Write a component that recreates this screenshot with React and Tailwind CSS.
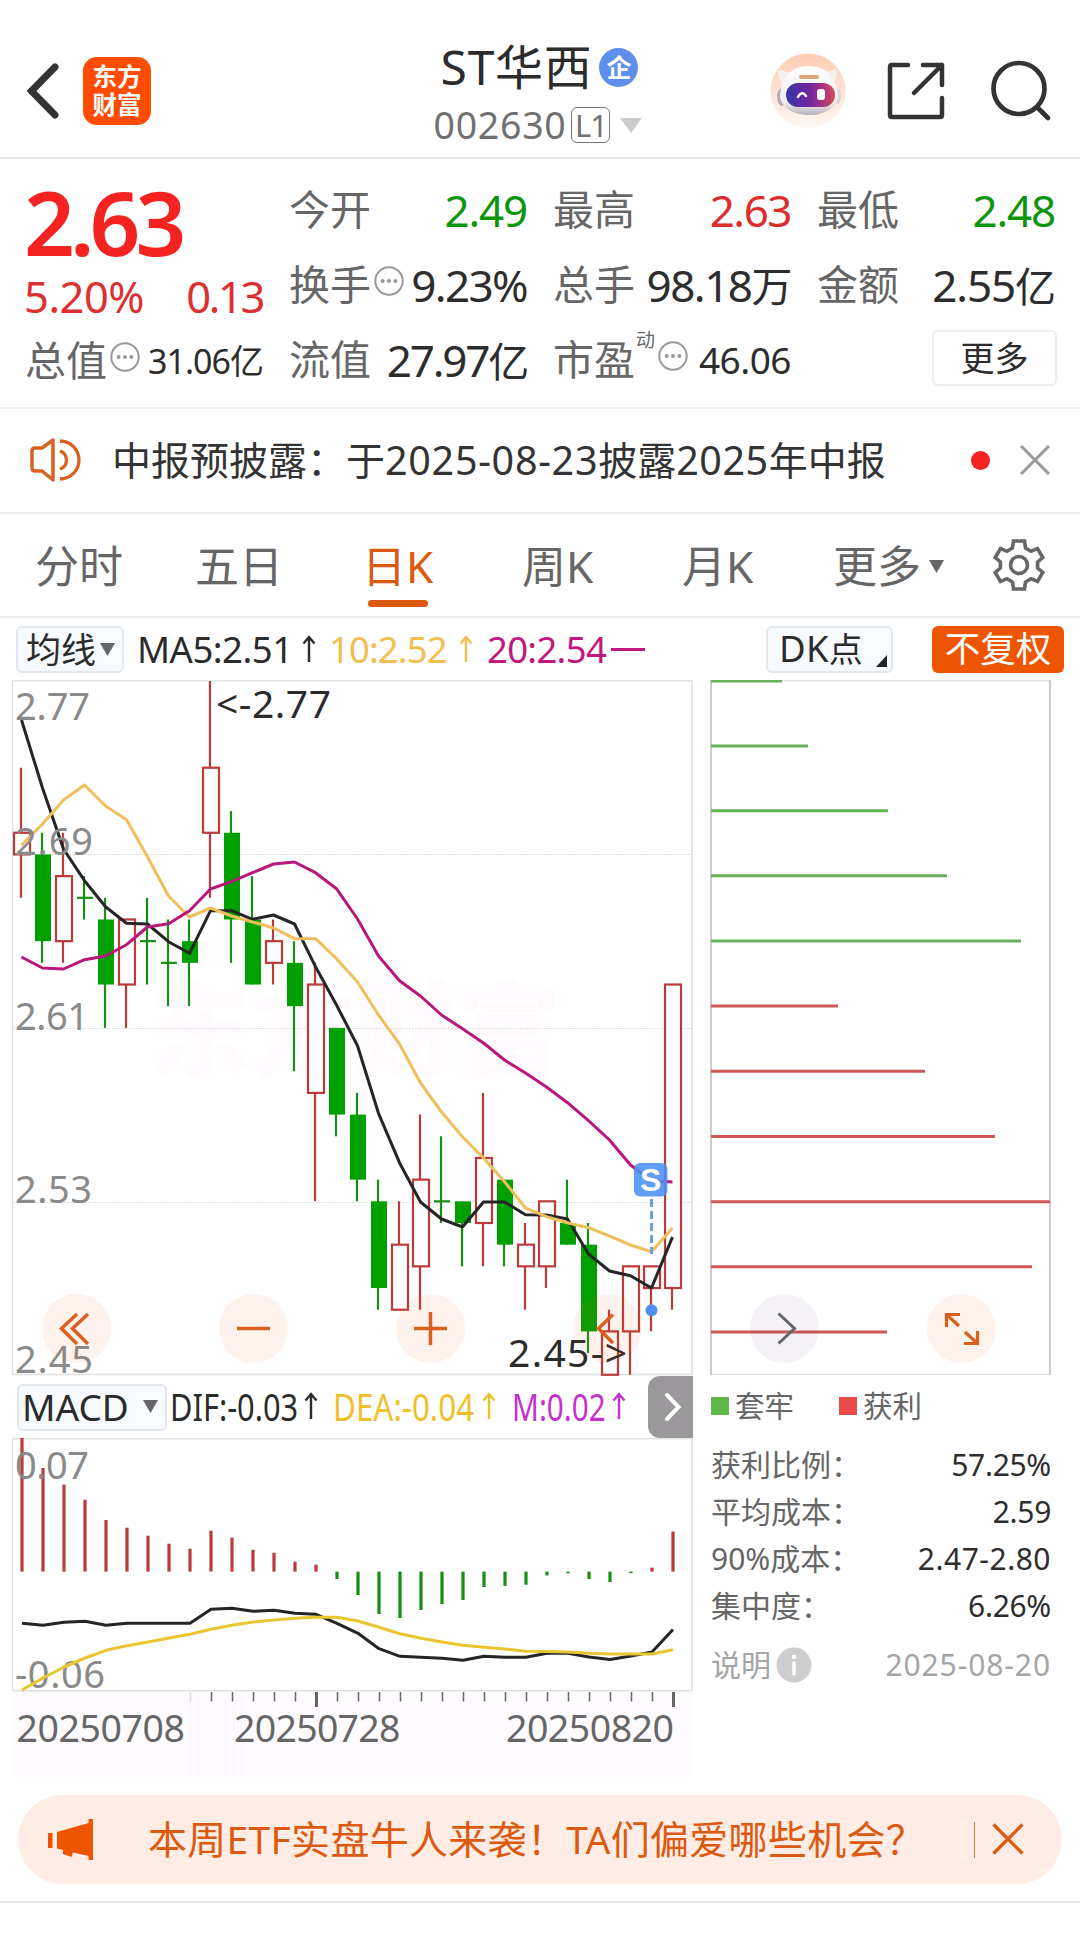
import React from "react";

const FONT = "font-['Noto_Sans','Noto_Sans_CJK_SC',sans-serif]";
const FAMILY = "'Noto Sans','Noto Sans CJK SC',sans-serif";

const RED = "#bb3a3a";
const GREEN = "#00a000";

/* Candles as [up, high, low, bodyTop, bodyBottom], in cents below 2.77 */
const CANDLES = [
  [1, 4, 10, 7, 8], [0, 7, 13, 8, 12], [1, 7, 13, 9, 12], [0, 9, 11, 10, 10],
  [0, 10, 16, 11, 14], [1, 11, 16, 11, 14], [0, 10, 14, 12, 12], [0, 11, 15, 13, 13],
  [0, 11, 15, 12, 13], [1, 0, 10, 4, 7], [0, 6, 13, 7, 11], [0, 9, 14, 11, 14],
  [1, 11, 14, 12, 13], [0, 12, 18, 13, 15], [1, 13, 24, 14, 19], [0, 16, 21, 16, 20],
  [0, 19, 24, 20, 23], [0, 23, 29, 24, 28], [1, 24, 29, 26, 29], [1, 20, 29, 23, 27],
  [0, 21, 25, 24, 24], [0, 24, 27, 24, 25], [1, 19, 27, 22, 25], [0, 23, 27, 23, 26],
  [1, 25, 29, 26, 27], [1, 24, 28, 24, 27], [0, 23, 26, 25, 26], [0, 25, 31, 26, 30],
  [1, 29, 32, 30, 32], [1, 27, 32, 27, 30], [1, 27, 30, 27, 28], [1, 14, 29, 14, 28],
];
const MA5 = [720, 788, 849, 880.7, 906.7, 923.3, 924, 941.7, 953.3, 910.7, 910.7, 919.3, 915, 924, 966.7, 1005, 1045.7, 1113.3, 1162.7, 1202, 1219, 1227, 1202, 1202, 1214.7, 1215, 1219, 1254, 1271, 1275.7, 1288, 1237];
const MA10 = [845, 824, 800, 785, 806, 819.7, 856.7, 896, 917, 908, 916, 922, 928, 938.7, 938.7, 958.7, 982, 1015, 1044, 1083, 1112, 1136.7, 1158, 1181.7, 1208, 1216.7, 1222.7, 1227.7, 1236, 1245, 1251.7, 1228];
const MA20 = [957, 968, 969, 959.7, 956, 944.7, 927, 923.7, 910.7, 889, 881.7, 872.7, 864, 862, 872.7, 888.7, 919, 956, 980.7, 996, 1015, 1028.7, 1043, 1060, 1073, 1087, 1102.7, 1120.7, 1140, 1165, 1180.7, 1182];
const MACD_BARS = [1438, 1468, 1484.7, 1499.7, 1520, 1527.7, 1535.7, 1543.7, 1548.7, 1530.7, 1537.7, 1549.7, 1552.7, 1561.7, 1564.7, 1579, 1595, 1614, 1618, 1610, 1604, 1600, 1587, 1586, 1584.7, 1575.4, 1573.2, 1579, 1582, 1573.2, 1567.6, 1531.5];
const DIF = [1623.3, 1625.3, 1622.3, 1621.3, 1625.3, 1623.3, 1623.3, 1623.3, 1623.3, 1609.3, 1608.3, 1611.3, 1610.3, 1613.3, 1614.3, 1623.3, 1633.3, 1648.7, 1656.3, 1657.3, 1658.3, 1660.3, 1656.3, 1657.3, 1657.3, 1653.3, 1653.3, 1657, 1659.6, 1656, 1652, 1629.5];
const DEA = [1690, 1678, 1667, 1658, 1650.3, 1645.7, 1642, 1638, 1634.3, 1629.3, 1625.3, 1622, 1620, 1618.3, 1617.3, 1617.3, 1621, 1627.3, 1633.7, 1638.3, 1642, 1645.3, 1647.3, 1649, 1651.3, 1651.5, 1652, 1653.3, 1654, 1654, 1654, 1649.7];
const CHIPS = [[681, 782, 0], [746, 808, 0], [810.7, 888, 0], [875.8, 947, 0], [941, 1021, 0], [1006, 838, 1], [1071.3, 925, 1], [1136.5, 995, 1], [1201.7, 1050, 1], [1266.8, 1032, 1], [1332, 887, 1]];

const cx = (i) => 21 + i * 21;
const py = (k) => 681 + k * 21.68;
const line = (ys, dx) => ys.map((y, i) => `${cx(i) + dx},${y}`).join(" ");

function Dots({ className }) {
  return (
    <svg viewBox="0 0 30 30" className={`h-[30px] w-[30px] shrink-0 ${className}`}>
      <circle cx="15" cy="15" r="13.7" fill="none" stroke="#999" strokeWidth="2" />
      <circle cx="8.6" cy="15" r="2" fill="#999" />
      <circle cx="15" cy="15" r="2" fill="#999" />
      <circle cx="21.4" cy="15" r="2" fill="#999" />
    </svg>
  );
}

function Header() {
  return (
    <header className="flex h-[159px] items-start justify-between border-b-2 border-[#e6e6e6] pl-[27px] pr-[28px]">
      <div className="mt-[57px] flex w-[300px] items-center gap-[24px]">
        <svg viewBox="0 0 32 56" className="h-[56px] w-[32px]">
          <path d="M28 4 4.500 28 28 52" fill="none" stroke="#333" strokeWidth="7" strokeLinecap="round" />
        </svg>
        <div className="flex h-[68px] w-[68px] flex-col items-center justify-center rounded-[14px] bg-[#ff4c00] pb-[2px] font-['Noto_Sans_CJK_SC',sans-serif] text-[24.500px] font-bold leading-[28px] text-white">
          <span>东方</span>
          <span>财富</span>
        </div>
      </div>
      <div className="flex flex-col items-center pt-[42px]">
        <div className="flex h-[50px] items-center text-[48px] leading-none text-[#2b2b2b]">
          <span className="tracking-[0.7px]">ST华西</span>
          <span className="ml-[7px] flex h-[39px] w-[39px] items-center justify-center rounded-full bg-[#5f8fea] text-[25px] font-bold text-white">企</span>
        </div>
        <div className="-ml-[3px] mt-[14px] flex h-[38px] items-center text-[37.500px] leading-none text-[#707070]">
          <span className="tracking-[0.7px]">002630</span>
          <span className="ml-[5px] flex h-[36px] w-[39px] items-center justify-center rounded-[6px] border-[1.5px] border-[#777] text-[31px] tracking-[-1px]">L1</span>
          <svg viewBox="0 0 22 15" className="ml-[10px] h-[15px] w-[22px]"><path d="M0 0H22L11 15Z" fill="#ccc" /></svg>
        </div>
      </div>
      <div className="mt-[53px] flex w-[300px] items-center justify-end">
        <svg viewBox="0 0 76 76" className="h-[76px] w-[76px]">
          <defs>
            <linearGradient id="halo" x1="0" y1="0" x2="0" y2="1"><stop offset="0" stopColor="#ffccb3" /><stop offset="1" stopColor="#fff8f5" /></linearGradient>
            <linearGradient id="visor" x1="0" y1="0" x2="1" y2="0"><stop offset="0" stopColor="#3437a8" /><stop offset="0.5" stopColor="#75249c" /><stop offset="1" stopColor="#d8485f" /></linearGradient>
            <linearGradient id="shell" x1="0" y1="0" x2="0" y2="1"><stop offset="0" stopColor="#fff" /><stop offset="0.75" stopColor="#efebee" /><stop offset="1" stopColor="#b8b0b8" /></linearGradient>
          </defs>
          <circle cx="38" cy="38" r="37.500" fill="url(#halo)" />
          <path d="M8 17 22 20 13 32Q7 25 8 17ZM66 16 54 20 63 30Q69 24 66 16Z" fill="#f5eeee" />
          <ellipse cx="12" cy="44" rx="5" ry="9" fill="#b5acb5" />
          <ellipse cx="67" cy="43" rx="4" ry="8" fill="#ddd5da" />
          <path d="M38 13C56 13 66 24 68 42 68 54 55 62 40 62 23 62 11 55 10 43 11 26 21 13 38 13Z" fill="url(#shell)" />
          <rect x="29" y="22" width="20" height="4" rx="2" fill="#dda676" />
          <rect x="16" y="30" width="49" height="24" rx="12" fill="url(#visor)" />
          <path d="M28 44Q32 37 36 43" fill="none" stroke="#fff" strokeWidth="2.500" strokeLinecap="round" />
          <rect x="47" y="36" width="8" height="11" rx="3" fill="#fff" />
        </svg>
        <svg viewBox="0 0 60 60" className="ml-[40px] h-[60px] w-[60px]">
          <path d="M22 4H6Q4 4 4 6V54Q4 56 6 56H54Q56 56 56 54V37M37 4H56V24M56 4 28 32" fill="none" stroke="#333" strokeWidth="4.500" strokeLinecap="round" strokeLinejoin="round" />
        </svg>
        <svg viewBox="0 0 64 64" className="ml-[42px] h-[64px] w-[64px]">
          <circle cx="31" cy="29.500" r="25.500" fill="none" stroke="#333" strokeWidth="4.700" />
          <path d="M49 48 60 59" stroke="#333" strokeWidth="4.700" strokeLinecap="round" />
        </svg>
      </div>
    </header>
  );
}

function Cell({ label, icon, sup, children, tone = "text-[#2d2d2d]", size = "text-[44px] tracking-[-0.8px]" }) {
  return (
    <div className="flex h-[75px] items-center justify-between whitespace-nowrap leading-none">
      <div className="-ml-[2px] flex items-center text-[41px] text-[#666]">
        <span>{label}</span>
        {sup && <span className="mb-[38px] ml-[1px] text-[19px]">{sup}</span>}
        {icon && <Dots className="mb-[8px] ml-[3px]" />}
      </div>
      <div className={`${size} ${tone}`}>{children}</div>
    </div>
  );
}

function Quote() {
  return (
    <section className="grid h-[250px] grid-cols-[236px_236px_236px_236px] gap-x-[28px] border-b-2 border-[#f0f0f2] pl-[27px] pt-[13px]">
      <div>
        <div className="-ml-[3px] flex h-[98px] items-center text-[89px] font-semibold leading-none tracking-[-5px] text-[#f52222]">2.63</div>
        <div className="flex h-[53px] items-center justify-between text-[43.500px] leading-none text-[#dd3030]">
          <span className="-ml-[3px] tracking-[-0.5px]">5.20%</span>
          <span className="tracking-[-2.400px]">0.13</span>
        </div>
        <Cell label="总值" icon size="text-[34px] tracking-[-1px]">31.06亿</Cell>
      </div>
      <div>
        <Cell label="今开" tone="text-[#0c960c]" size="text-[44px] tracking-[-1.200px]">2.49</Cell>
        <Cell label="换手" icon size="text-[44px] tracking-[-1.6px]">9.23%</Cell>
        <Cell label="流值" size="text-[44px] tracking-[-2.200px]">27.97<span className="text-[41px]">亿</span></Cell>
      </div>
      <div>
        <Cell label="最高" tone="text-[#dd2c2c]" size="text-[44px] tracking-[-1.500px]">2.63</Cell>
        <Cell label="总手" size="text-[44px] tracking-[-1.500px]">98.18<span className="text-[41px]">万</span></Cell>
        <Cell label="市盈" sup="动" icon size="text-[37px] tracking-[-0.500px]">46.06</Cell>
      </div>
      <div>
        <Cell label="最低" tone="text-[#0c960c]" size="text-[44px] tracking-[-1.200px]">2.48</Cell>
        <Cell label="金额" size="text-[44px] tracking-[-1.100px]">2.55<span className="text-[41px]">亿</span></Cell>
        <div className="flex h-[71px] items-center justify-end">
          <button className="-mr-[2px] flex h-[56px] w-[125px] items-center justify-center rounded-[6px] border-2 border-[#ececf0] text-[34px] leading-none text-[#2d2d2d]">更多</button>
        </div>
      </div>
    </section>
  );
}

function Notice() {
  return (
    <section className="flex h-[105px] items-center border-b-2 border-[#e9e9ee] pb-[1px] pl-[29px] pr-[30px]">
      <svg viewBox="0 0 52 46" className="h-[46px] w-[52px]">
        <path d="M24 3V43L13 34H6Q3 34 3 31V14Q3 11 6 11H13Z" fill="none" stroke="#d9601f" strokeWidth="3.500" strokeLinejoin="round" />
        <path d="M31 4A19 19 0 0 1 31 42M31 14A9.500 9.500 0 0 1 31 32" fill="none" stroke="#d9601f" strokeWidth="3.300" />
      </svg>
      <p className="ml-[31px] whitespace-nowrap text-[39px] leading-none text-[#333]">
        中报预披露：于<span className="text-[39.500px] tracking-[0.700px]">2025-08-23</span>披露<span className="text-[39.500px] tracking-[0.500px]">2025</span>年中报
      </p>
      <span className="ml-auto mr-[30px] h-[19px] w-[19px] rounded-full bg-[#f52222]" />
      <svg viewBox="0 0 30 30" className="h-[30px] w-[30px]"><path d="M1 1 29 29M29 1 1 29" stroke="#999" strokeWidth="3" /></svg>
    </section>
  );
}

function Tabs() {
  return (
    <nav className="flex h-[104px] items-center border-b-2 border-[#e9e9ee] pl-[35px] pt-[2px] text-[44px] leading-none text-[#666]">
      <span className="w-[160px]">分时</span>
      <span className="w-[167px]">五日</span>
      <span className="relative w-[160px] text-[#dc5a10]">
        日K
        <i className="absolute left-[6px] top-[56px] h-[7px] w-[60px] rounded-full bg-[#dc5a10]" />
      </span>
      <span className="w-[160px]">周K</span>
      <span className="w-[151px]">月K</span>
      <span>更多</span>
      <svg viewBox="0 0 15 13" className="ml-[8px] h-[13px] w-[15px]"><path d="M0 0H15L7.500 13Z" fill="#666" /></svg>
      <svg viewBox="0 0 52 54" className="mb-[2px] ml-[49px] h-[54px] w-[52px]">
        <path d="M20.500 3H31.500L32.500 10 38 13.300 44.500 10.500 49.800 19.500 44.600 24V30L49.800 34.500 44.500 43.500 38 40.700 32.500 44 31.500 51H20.500L19.500 44 14 40.700 7.500 43.500 2.200 34.500 7.400 30V24L2.200 19.500 7.500 10.500 14 13.300 19.500 10Z" fill="none" stroke="#666" strokeWidth="3.600" />
        <circle cx="26" cy="27" r="8.500" fill="none" stroke="#666" strokeWidth="3.600" />
      </svg>
    </nav>
  );
}

/* Slim upward marker that follows each indicator reading */
function Arrow() {
  return (
    <svg viewBox="0 0 14 28" className="h-[28px] w-[14px] shrink-0">
      <path d="M7 27V2M1.500 8.500 7 2 12.500 8.500" fill="none" stroke="currentColor" strokeWidth="2.400" />
    </svg>
  );
}

function Toolbar() {
  return (
    <div className="flex h-[62px] items-center pl-[16px] text-[36.500px] leading-none text-[#2b2b2b]">
      <div className="flex h-[47px] w-[108px] items-center rounded-[6px] border-2 border-[#e4e6f0] bg-[#f7faff] pl-[8px] text-[35px]">
        均线
        <svg viewBox="0 0 15 13" className="ml-[4px] h-[13px] w-[15px]"><path d="M0 0H15L7.500 13Z" fill="#666" /></svg>
      </div>
      <div className="ml-[13px] flex w-[192px] items-center whitespace-nowrap"><span className="w-[165px] tracking-[-0.5px]">MA5:2.51</span><Arrow /></div>
      <div className="flex w-[158px] items-center whitespace-nowrap text-[#f3bd50]"><span className="w-[130px] tracking-[-0.9px]">10:2.52</span><Arrow /></div>
      <div className="flex w-[190px] items-center whitespace-nowrap text-[#c0187c]"><span className="w-[124px] tracking-[-0.7px]">20:2.54</span><i className="h-[3px] w-[34px] bg-[#c0187c]" /></div>
      <div className="ml-auto flex h-[47px] w-[127px] items-end justify-between rounded-[6px] border-2 border-[#e4e6f0] bg-[#f7faff] pb-[4px] pl-[11px] pr-[4px]">
        <span className="whitespace-nowrap tracking-[0.300px]">DK<span className="text-[34px]">点</span></span>
        <svg viewBox="0 0 11 12" className="h-[12px] w-[11px] shrink-0"><path d="M11 0V12H0Z" fill="#222" /></svg>
      </div>
      <div className="ml-[39px] mr-[16px] flex h-[47px] w-[132px] items-center justify-center rounded-[6px] bg-[#ee5500] text-[35.500px] text-white">不复权</div>
    </div>
  );
}

function PriceChart() {
  return (
    <svg viewBox="12 680 681 696" className="block h-[696px] w-[681px]" fontFamily={FAMILY}>
      <text x="148" y="1069" fontSize="103" fontWeight="900" fill="#fefafe">东方财富</text>
      <rect x="12.500" y="680.700" width="679.500" height="693.800" fill="none" stroke="#e2e2e2" strokeWidth="1.600" />
      {[854, 1028, 1202].map((y) => <path key={y} d={`M13 ${y}.5H692`} stroke="#d6d6d6" strokeWidth="1" strokeDasharray="1.500 1.500" />)}
      {CANDLES.map(([up, hi, lo, a, b], i) => {
        const x = cx(i);
        if (up)
          return (
            <g key={i} stroke={RED} strokeWidth="2.200">
              <path d={`M${x} ${py(hi)}V${py(a)}M${x} ${py(b)}V${py(lo)}`} />
              <rect x={x - 7} y={py(a)} width="16" height={py(b) - py(a)} fill="#fff" />
            </g>
          );
        return (
          <g key={i}>
            <path d={`M${x} ${py(hi)}V${py(lo)}`} stroke="#159015" strokeWidth="2.200" />
            {a === b ? <path d={`M${x - 7} ${py(a)}H${x + 9}`} stroke="#159015" strokeWidth="2.200" /> : <rect x={x - 7} y={py(a)} width="16" height={py(b) - py(a)} fill={GREEN} />}
          </g>
        );
      })}
      <g fill="none" strokeWidth="3" strokeLinejoin="round">
        <polyline points={line(MA5, 0.5)} stroke="#252525" />
        <polyline points={line(MA10, 0.5)} stroke="#efbf5c" />
        <polyline points={line(MA20, 0.5)} stroke="#b9177a" />
      </g>
      <g fontSize="38" fill="#8a8a8a">
        <text x="15" y="719.500" textLength="75">2.77</text>
        <text x="15" y="855" textLength="78">2.69</text>
        <text x="15" y="1029.500" textLength="74">2.61</text>
        <text x="15" y="1203" textLength="77">2.53</text>
        <text x="15" y="1373" textLength="78">2.45</text>
      </g>
      <g fontSize="39" fill="#2b2b2b">
        <text x="216" y="718" textLength="115">&lt;-2.77</text>
        <text x="508" y="1367" textLength="119">2.45-&gt;</text>
      </g>
      <rect x="634" y="1163" width="33.500" height="33.500" rx="6" fill="#4a90f5" fillOpacity="0.88" />
      <text x="650.700" y="1191" fontSize="32" fontWeight="600" textAnchor="middle" fill="#fff" fontFamily="Liberation Sans, sans-serif">S</text>
      <path d="M651.500 1199V1254" stroke="#6a9fe0" strokeWidth="3" strokeDasharray="8 4" />
      <circle cx="651.500" cy="1310.300" r="6" fill="#5090f0" />
    </svg>
  );
}

const ROUND = "absolute top-[614px] h-[69px] w-[69px] rounded-full";

function RoundButton({ place, tint = "bg-[#f05a14]/[0.08]", color = "#d9601f", d, width = 3.5 }) {
  return (
    <button className={`${ROUND} ${place} ${tint}`}>
      <svg viewBox="0 0 69 69" className="h-[69px] w-[69px]"><path d={d} fill="none" stroke={color} strokeWidth={width} /></svg>
    </button>
  );
}

function MacdBar() {
  return (
    <div className="flex h-[62px] items-center whitespace-nowrap pl-[5px] text-[38.500px] leading-none">
      <div className="flex h-[47px] w-[150px] shrink-0 items-center justify-between rounded-[6px] border-2 border-[#e4e6f0] bg-[#f7faff] pb-[2px] pl-[3px] pr-[7px] text-[37px] text-[#2b2b2b]">
        <span className="inline-block w-[104px]">MACD</span>
        <svg viewBox="0 0 15 13" className="h-[13px] w-[15px]"><path d="M0 0H15L7.500 13Z" fill="#666" /></svg>
      </div>
      <div className="ml-[3px] flex w-[149px] shrink-0 items-center pb-[2px] text-[#2b2b2b]"><span className="inline-block w-[134px] origin-left scale-x-[0.8]">DIF:-0.03</span><Arrow /></div>
      <div className="ml-[14px] flex w-[164px] shrink-0 items-center pb-[2px] text-[#edc02c]"><span className="inline-block w-[149px] origin-left scale-x-[0.815]">DEA:-0.04</span><Arrow /></div>
      <div className="ml-[15px] flex w-[120px] shrink-0 items-center pb-[2px] text-[#c433c9]"><span className="inline-block w-[100px] origin-left scale-x-[0.77]">M:0.02</span><Arrow /></div>
      <button className="ml-auto flex h-[62px] w-[45px] shrink-0 items-center justify-center rounded-l-[12px] bg-[#9b989b]">
        <svg viewBox="0 0 18 30" className="ml-[4px] h-[30px] w-[18px]"><path d="M3 3 14.500 15 3 27" fill="none" stroke="#fff" strokeWidth="4" strokeLinecap="round" /></svg>
      </button>
    </div>
  );
}

function MacdChart() {
  return (
    <svg viewBox="12 1438 681 340" className="block h-[340px] w-[681px]" fontFamily={FAMILY}>
      <rect x="12" y="1691" width="681" height="86" fill="#fefbff" />
      {[190, 198, 226, 234, 242].map((x) => <path key={x} d={`M${x} 1692V1777`} stroke="#f7f4fa" />)}
      <rect x="12.500" y="1438.700" width="679.500" height="252" fill="none" stroke="#e2e2e2" strokeWidth="1.600" />
      {MACD_BARS.map((y, i) => <path key={i} d={`M${cx(i) + 1} 1571.600V${y}`} stroke={y < 1571 ? RED : "#159015"} strokeWidth="3.200" />)}
      <g fontSize="38" fill="#8a8a8a">
        <text x="15" y="1479" textLength="74">0.07</text>
        <text x="15" y="1687.500" textLength="90">-0.06</text>
      </g>
      <g fill="none" strokeWidth="3" strokeLinejoin="round">
        <polyline points={line(DIF, 1)} stroke="#252525" />
        <polyline points={line(DEA, 1)} stroke="#ebc52f" />
      </g>
      {MACD_BARS.map((_, i) => {
        if (i < 8) return null;
        const major = i === 14 || i === 31;
        return <path key={i} d={`M${cx(i) + 1.5} 1692V${major ? 1707 : 1701.5}`} stroke={i === 8 ? "#ddd" : "#666"} strokeWidth={major ? 3 : 1.5} />;
      })}
      <g fontSize="37.500" fill="#666">
        <text x="16.500" y="1742" textLength="168.500">20250708</text>
        <text x="234" y="1742" textLength="166.500">20250728</text>
        <text x="506" y="1742" textLength="168">20250820</text>
      </g>
    </svg>
  );
}

function ChipChart() {
  return (
    <svg viewBox="710 680 342 696" className="block h-[696px] w-[342px]">
      <path d="M711 680.700H1050M711 1374.500H1050" stroke="#e2e2e2" strokeWidth="1.600" />
      <path d="M711 680V1375M1050 680V1375" stroke="#ccc" strokeWidth="2" />
      {CHIPS.map(([y, x, up]) => <path key={y} d={`M711 ${y}H${x}`} stroke={up ? "#cf5757" : "#67b35a"} strokeWidth="3" />)}
    </svg>
  );
}

function ChipRow({ label, value }) {
  return (
    <div className="flex h-[47px] items-center justify-between">
      <span className="text-[#666]">{label}</span>
      <span className="tracking-[-0.300px] text-[#2d2d2d]">{value}</span>
    </div>
  );
}

function ChipPanel() {
  return (
    <div className="pl-[1px] text-[30px] leading-none">
      <div className="flex h-[64px] items-center pb-[5px] text-[29.500px] text-[#666]">
        <i className="h-[18px] w-[18px] bg-[#5cb848]" />
        <span className="ml-[6px]">套牢</span>
        <i className="ml-[45px] h-[18px] w-[18px] bg-[#ec4b4b]" />
        <span className="ml-[6px]">获利</span>
      </div>
      <div className="w-[340px] pt-[1px]">
        <ChipRow label="获利比例：" value="57.25%" />
        <ChipRow label="平均成本：" value="2.59" />
        <ChipRow label="90%成本：" value={<span className="tracking-[0.500px]">2.47-2.80</span>} />
        <ChipRow label="集中度：" value="6.26%" />
        <div className="mt-[12px] flex h-[48px] items-center text-[#a5a5a5]">
          <span>说明</span>
          <svg viewBox="0 0 36 36" className="ml-[5px] h-[36px] w-[36px]">
            <circle cx="18" cy="18" r="17.500" fill="#cdcdcd" />
            <circle cx="18" cy="10" r="2.300" fill="#fff" />
            <path d="M18 16V27" stroke="#fff" strokeWidth="3.600" strokeLinecap="round" />
          </svg>
          <span className="ml-auto tracking-[0.900px]">2025-08-20</span>
        </div>
      </div>
    </div>
  );
}

function Banner() {
  return (
    <div className="ml-[18px] mt-[17px] flex h-[89px] w-[1044px] items-center rounded-full bg-[#ffede5] pl-[29px] text-[#dc5a10]">
      <svg viewBox="0 0 48 42" className="h-[42px] w-[48px]">
        <path d="M1 14H5.500V29H1ZM10 13 41.500 4V0H46V41H41.500V37L26 33.500 24.500 38 16 35V31L10 29.500Z" fill="#ee5500" />
      </svg>
      <p className="mb-[2px] ml-[53px] whitespace-nowrap text-[39px] leading-none tracking-[0.300px]">本周ETF实盘牛人来袭！TA们偏爱哪些机会？</p>
      <i className="ml-auto h-[36px] w-[1.500px] bg-[#dc7a45]" />
      <svg viewBox="0 0 32 32" className="mb-[2px] ml-[17px] mr-[38px] h-[32px] w-[32px]"><path d="M1.500 1.500 30.500 30.500M30.500 1.500 1.500 30.500" stroke="#dc5a10" strokeWidth="3.300" /></svg>
    </div>
  );
}

export default function App() {
  return (
    <main className={`h-[1935px] w-[1080px] overflow-hidden bg-white ${FONT}`}>
      <Header />
      <Quote />
      <Notice />
      <Tabs />
      <Toolbar />
      <div className="relative flex pl-[12px]">
        <div className="w-[681px]">
          <PriceChart />
          <MacdBar />
          <MacdChart />
        </div>
        <div className="ml-[17px] w-[342px]">
          <ChipChart />
          <ChipPanel />
        </div>
        <RoundButton place="left-[42px]" d="M35 20 19.500 34.500 35 50M46 20 30.500 34.500 46 50" />
        <RoundButton place="left-[219px]" d="M18 34.500H51" />
        <RoundButton place="left-[396px]" d="M18 34.500H51M34.500 18V51" />
        <RoundButton place="left-[573px]" d="M40 20.500 25.500 34.500 40 49" />
        <RoundButton place="left-[750px]" tint="bg-[#785a8c]/[0.08]" color="#666" width={3} d="M28.500 19.500 44.500 34.500 28.500 49.500" />
        <RoundButton place="left-[927px]" width={3.2} d="M33 20.500H19.500V33M20 21 32 32M37 49.500H50.500V37M50 49 38 38" />
      </div>
      <Banner />
      <div className="mt-[17px] h-[2px] bg-[#e8e8e8]" />
    </main>
  );
}
